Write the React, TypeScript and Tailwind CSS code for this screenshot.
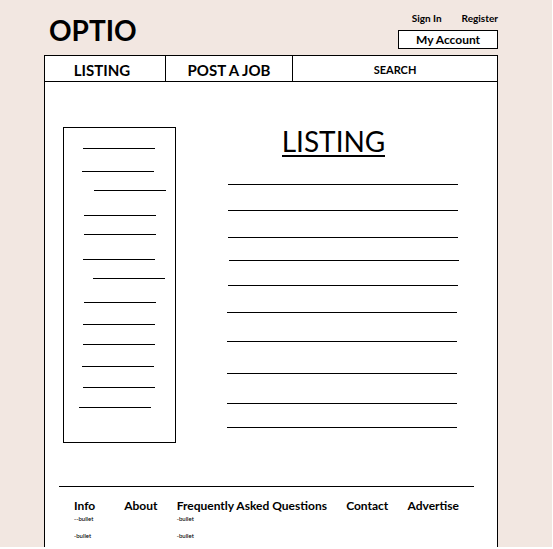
import React from "react";

type Stroke = { x: number; y: number };

// Placeholder strokes, relative to the inside of each block.
const sidebarStrokes: Stroke[] = [
  { x: 19, y: 20 },
  { x: 18, y: 43 },
  { x: 30, y: 62 },
  { x: 20, y: 87 },
  { x: 20, y: 106 },
  { x: 19, y: 131 },
  { x: 29, y: 150 },
  { x: 20, y: 174 },
  { x: 19, y: 196 },
  { x: 19, y: 216 },
  { x: 18, y: 238 },
  { x: 19, y: 259 },
  { x: 15, y: 279 },
];

const listingStrokes: Stroke[] = [
  { x: 1, y: 0 },
  { x: 1, y: 26 },
  { x: 1, y: 53 },
  { x: 2, y: 76 },
  { x: 1, y: 101 },
  { x: 0, y: 128 },
  { x: 0, y: 157 },
  { x: 0, y: 189 },
  { x: 0, y: 219 },
  { x: 0, y: 243 },
];

function Strokes({ items, length }: { items: Stroke[]; length: number }) {
  return (
    <>
      {items.map((s) => (
        <rect key={s.y} x={s.x} y={s.y} width={length} height={1} />
      ))}
    </>
  );
}

export default function App() {
  return (
    <div className="flex min-h-screen flex-col border-r border-b-2 border-white bg-[#f2e7e1] pr-[54px] pl-11 font-['Lato','Liberation_Sans',sans-serif] text-black">
      <header className="flex h-[55px] shrink-0 justify-between">
        <h1 className="pt-3 pl-[5px] text-[28px] leading-9 font-bold">OPTIO</h1>
        <div className="flex flex-col items-end gap-1 pt-2.5">
          <nav className="flex gap-5 text-[10px] leading-4 font-bold">
            <a href="#sign-in">Sign In</a>
            <a href="#register">Register</a>
          </nav>
          <button className="h-[19px] w-[100px] border border-black bg-white text-[12px] leading-4 font-bold">
            My Account
          </button>
        </div>
      </header>

      <div className="flex flex-1 flex-col border-x border-t border-black bg-white">
        <nav className="flex h-[26px] shrink-0 border-b border-black text-center text-[15px] leading-7 font-bold">
          <a href="#listing" className="w-[121px] border-r border-black pr-1.5">
            LISTING
          </a>
          <a href="#post" className="w-[127px] border-r border-black">
            POST A JOB
          </a>
          <a href="#search" className="flex-1 text-[11px] leading-7">
            SEARCH
          </a>
        </nav>

        <main className="flex pt-[45px] pb-[43px] pl-[18px]">
          <aside className="h-[316px] w-[113px] shrink-0 border border-black">
            <svg width="111" height="314" className="block" aria-hidden="true">
              <Strokes items={sidebarStrokes} length={72} />
            </svg>
          </aside>
          <section className="flex flex-1 flex-col items-center pr-9 pl-12">
            <h2 className="mr-[18px] border-b-2 border-black text-[28px] leading-7">
              LISTING
            </h2>
            <svg width="232" height="244" className="mt-[27px] block" aria-hidden="true">
              <Strokes items={listingStrokes} length={230} />
            </svg>
          </section>
        </main>

        <footer className="mr-[23px] ml-3.5 border-t border-black px-[15px] pt-[11px]">
          <div className="flex justify-between text-[12px] leading-4 font-bold">
            <div className="w-[31px]">
              <a href="#info">Info</a>
              <ul className="text-[6px] leading-[9px] font-medium">
                <li className="mb-2">--bullet</li>
                <li>-bullet</li>
              </ul>
            </div>
            <a href="#about">About</a>
            <div>
              <a href="#faq">Frequently Asked Questions</a>
              <ul className="text-[6px] leading-[9px] font-medium">
                <li className="mb-2">-bullet</li>
                <li>-bullet</li>
              </ul>
            </div>
            <a href="#contact">Contact</a>
            <a href="#advertise">Advertise</a>
          </div>
        </footer>
      </div>
    </div>
  );
}
